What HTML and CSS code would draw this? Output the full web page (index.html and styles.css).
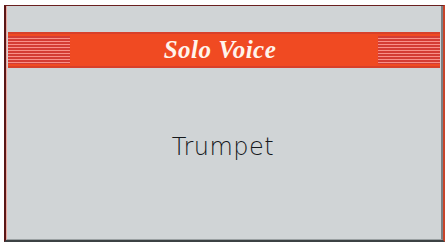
FILE: index.html
```html
<!DOCTYPE html>
<html>
<head>
<meta charset="utf-8">
<link rel="stylesheet" href="styles.css">
</head>
<body>
<div class="panel">
  <div class="inner">
    <div class="band">
      <div class="stripes"></div>
      <div class="title">Solo Voice</div>
      <div class="stripes"></div>
    </div>
    <div class="content">Trumpet</div>
  </div>
</div>
</body>
</html>
```
FILE: styles.css
```css
html, body {
  margin: 0;
  padding: 0;
  background: #ffffff;
  width: 445px;
  height: 242px;
  overflow: hidden;
}
.panel {
  margin: 5px 0 0 4px;
  width: 441px;
  height: 237px;
  box-sizing: border-box;
  border-left: 2px solid #5a1616;
  border-top: 1px solid #6a2020;
  border-right: 2px solid #c8442a;
  border-bottom: 2px solid #3c4244;
  background: #d0d4d6;
}
.inner {
  height: 100%;
  box-sizing: border-box;
  border-left: 1px solid #e8a8a0;
  border-right: 2px solid #7a8084;
  border-bottom: 1px solid #9aa0a2;
  padding-top: 26px;
  display: flex;
  flex-direction: column;
}
.band {
  height: 36px;
  margin: 0 1px 0 1px;
  background: #f04a22;
  display: flex;
  align-items: stretch;
  border-top: 2px solid #d8402a;
  border-bottom: 2px solid #d8402a;
  box-sizing: border-box;
}
.stripes {
  width: 62px;
  background: repeating-linear-gradient(to bottom, #d43c34 0, #d43c34 2px, #f89088 2px, #f89088 3px);
  margin: 2px 0;
}
.title {
  flex: 1;
  text-align: center;
  font-family: "Liberation Serif", serif;
  font-style: italic;
  font-weight: bold;
  font-size: 25px;
  color: #fff4ec;
  line-height: 32px;
  letter-spacing: 0.5px;
  padding-right: 8px;
}
.content {
  flex: 1;
  display: flex;
  align-items: center;
  justify-content: center;
  font-family: "DejaVu Sans", sans-serif;
  font-weight: 200;
  font-size: 24px;
  letter-spacing: 0.5px;
  color: #15181c;
  padding-bottom: 14px;
  padding-right: 2px;
}
```
